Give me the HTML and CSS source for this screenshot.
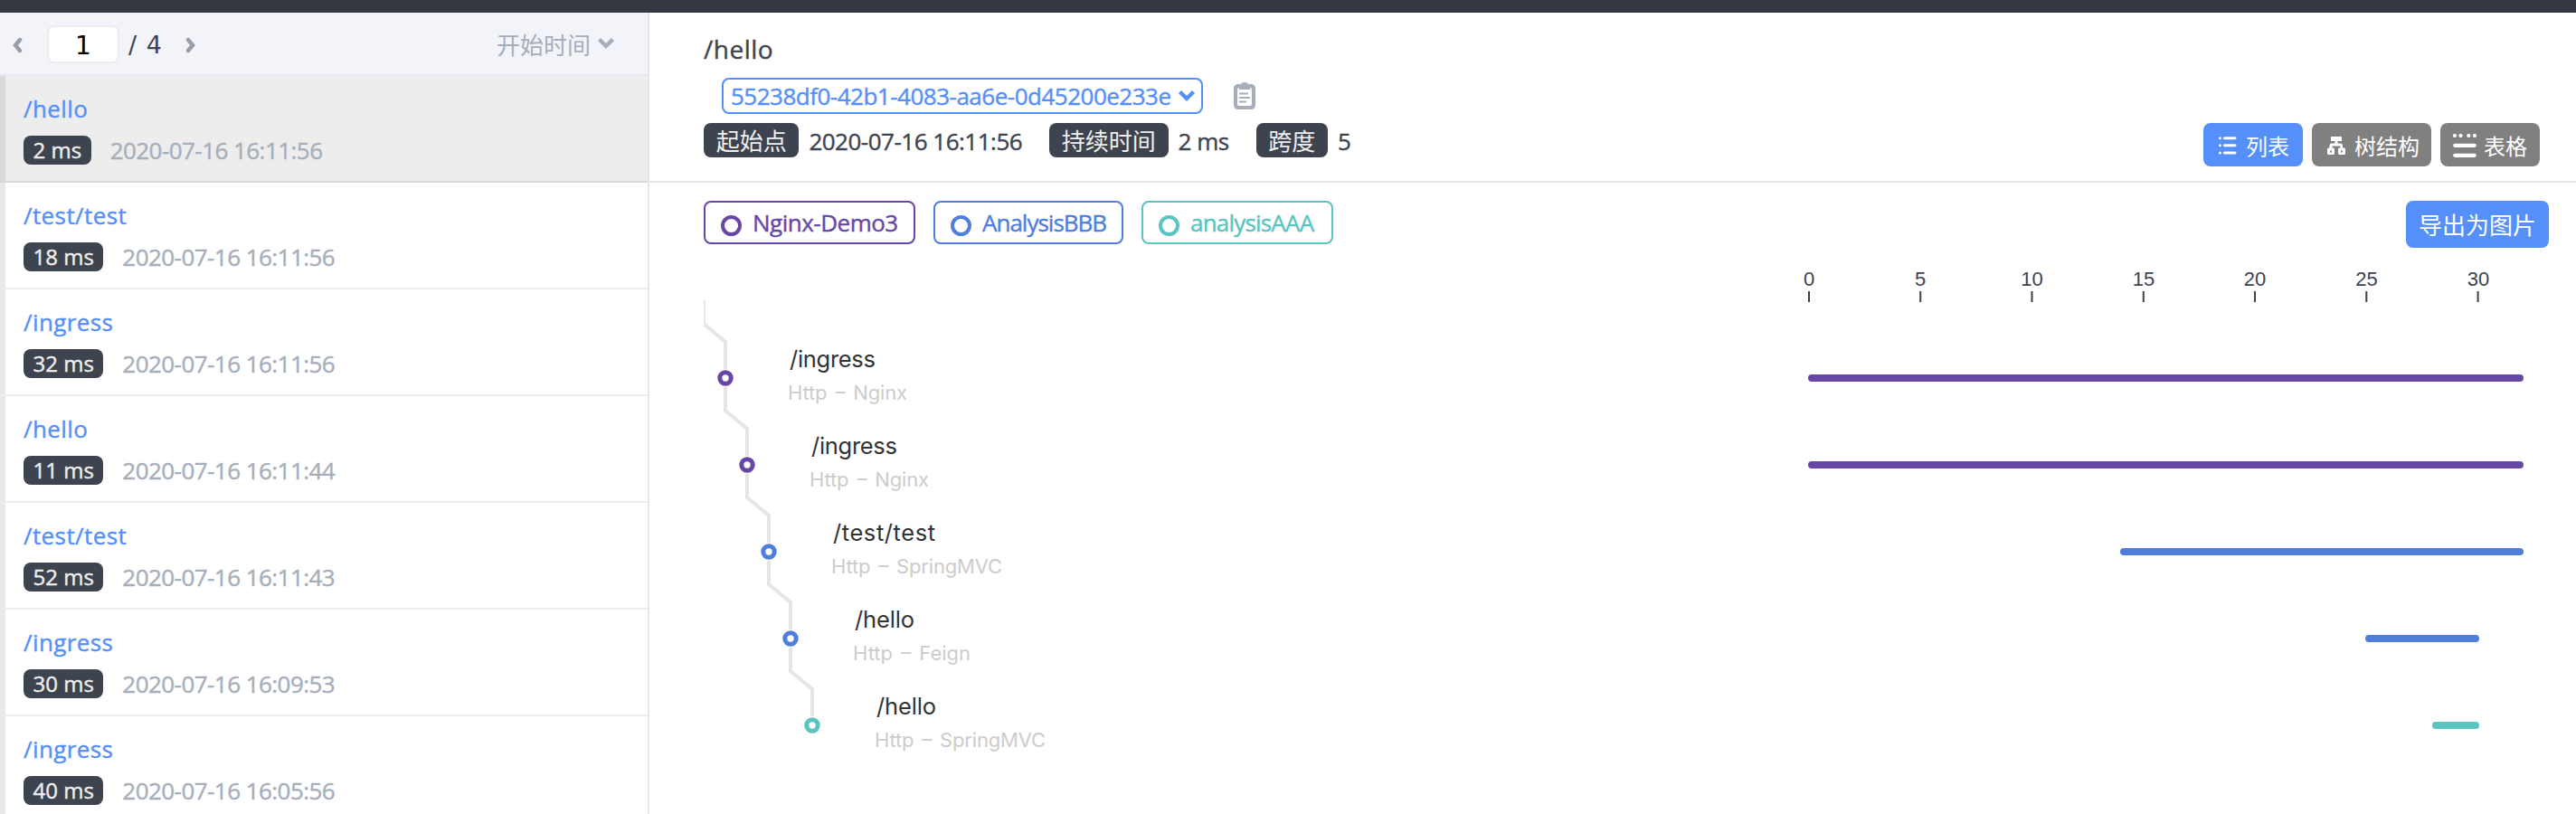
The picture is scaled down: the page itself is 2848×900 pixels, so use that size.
FILE: index.html
```html
<!DOCTYPE html>
<html lang="zh-CN">
<head>
<meta charset="utf-8">
<title>Trace</title>
<link rel="stylesheet" href="styles.css">
</head>
<body>
<div class="topbar"></div>
<div class="page">
  <aside class="sidebar">
    <div class="pager">
      <svg class="arrow" width="12" height="20" viewBox="0 0 12 20"><path d="M9 4L4 10L9 16"/></svg>
      <span class="page-input">1</span>
      <span class="page-total">/ 4</span>
      <svg class="arrow" width="12" height="20" viewBox="0 0 12 20"><path d="M3 4L8 10L3 16"/></svg>
      <div class="sort"><span>开始时间</span><svg width="20" height="14" viewBox="0 0 20 14"><path d="M2.500 2.500L10 10L17.500 2.500"/></svg></div>
    </div>
    <ul class="traces">
      <li class="trace active"><div class="name">/hello</div><div class="meta"><span class="tag">2 ms</span><time>2020-07-16 16:11:56</time></div></li>
      <li class="trace"><div class="name">/test/test</div><div class="meta"><span class="tag">18 ms</span><time>2020-07-16 16:11:56</time></div></li>
      <li class="trace"><div class="name">/ingress</div><div class="meta"><span class="tag">32 ms</span><time>2020-07-16 16:11:56</time></div></li>
      <li class="trace"><div class="name">/hello</div><div class="meta"><span class="tag">11 ms</span><time>2020-07-16 16:11:44</time></div></li>
      <li class="trace"><div class="name">/test/test</div><div class="meta"><span class="tag">52 ms</span><time>2020-07-16 16:11:43</time></div></li>
      <li class="trace"><div class="name">/ingress</div><div class="meta"><span class="tag">30 ms</span><time>2020-07-16 16:09:53</time></div></li>
      <li class="trace"><div class="name">/ingress</div><div class="meta"><span class="tag">40 ms</span><time>2020-07-16 16:05:56</time></div></li>
    </ul>
  </aside>
  <main class="detail">
    <header class="head">
      <h1>/hello</h1>
      <div class="id-row">
        <div class="trace-id"><span>55238df0-42b1-4083-aa6e-0d45200e233e</span><svg width="20" height="14" viewBox="0 0 20 14"><path d="M2.500 2.500L10 10L17.500 2.500"/></svg></div>
        <svg class="clip" width="24" height="30" viewBox="0 0 24 30"><path fill="#a7aebb" fill-rule="evenodd" d="M4.500 2H8Q8.500 0 12 0Q15.500 0 16 2H19.500Q24 2.500 24 7V25Q24 30 19 30H5Q0 30 0 25V7Q0 2.500 4.500 2ZM4 7V24Q4 26 6 26H18Q20 26 20 24V7L18 6V8H6V6Z"/><path stroke="#a7aebb" stroke-width="2" d="M6 12.500H16M6 17H18M6 21.500H14"/></svg>
      </div>
      <div class="info-row">
        <div class="info"><span class="label">起始点</span><span class="value">2020-07-16 16:11:56</span></div>
        <div class="info"><span class="label">持续时间</span><span class="value">2 ms</span></div>
        <div class="info"><span class="label">跨度</span><span class="value">5</span></div>
        <div class="views">
          <button class="view list on"><svg width="20" height="20" viewBox="0 0 20 20"><path d="M6.500 1.700H18M6.500 9.800H18M6.500 18H18"/><path d="M1.500 1.700h.01M1.500 9.800h.01M1.500 18h.01"/></svg>列表</button>
          <button class="view tree"><svg width="20" height="20" viewBox="0 0 20 20"><path class="solid" fill-rule="evenodd" d="M4 0H15.500Q16 0 16 .5V5H11.500V7.500H14.500Q17 7.500 17 10V12.500H18.500Q20 12.500 20 14V18.500Q20 20 18.500 20H13.500Q12 20 12 18.500V14Q12 12.500 13.500 12.500H14.500V10.500H5.500V12.500H6.500Q8 12.500 8 14V18.500Q8 20 6.500 20H1.500Q0 20 0 18.500V14Q0 12.500 1.500 12.500H2.500V10Q2.500 7.500 5 7.500H8.500V5H4ZM3 15.500V17.500H5V15.500ZM15 15.500V17.500H17V15.500Z"/></svg>树结构</button>
          <button class="view table"><svg width="26" height="26" viewBox="0 0 26 26"><path d="M2.200 12.800H23.800M2.200 23.800H23.800"/><path d="M2 2h.01M8.500 2h.01M17.300 2h.01M24 2h.01"/></svg>表格</button>
        </div>
      </div>
    </header>
    <div class="legend">
      <span class="chip purple"><i></i>Nginx-Demo3</span>
      <span class="chip blue"><i></i>AnalysisBBB</span>
      <span class="chip teal"><i></i>analysisAAA</span>
      <button class="export">导出为图片</button>
    </div>
    <svg class="chart" width="2130" height="626" viewBox="718 274 2130 626">
      <g class="axis">
        <text x="2000" y="316">0</text><text x="2123" y="316">5</text><text x="2246.500" y="316">10</text><text x="2370" y="316">15</text><text x="2493" y="316">20</text><text x="2616.500" y="316">25</text><text x="2740" y="316">30</text>
        <path d="M2000 322v12M2123.200 322v12M2246.500 322v12M2369.800 322v12M2493 322v12M2616.300 322v12M2739.600 322v12"/>
      </g>
      <path class="link thin" d="M779 332V359"/>
      <path class="link" d="M779 359L802 378V408M802 428V454L826 474V504M826 524V550L850 570V600M850 620V646L874 666V696M874 716V742L898 762V792"/>
      <g class="node purple"><circle cx="802" cy="418" r="6.200"/><circle cx="826" cy="514" r="6.200"/></g>
      <g class="node blue"><circle cx="850" cy="610" r="6.200"/><circle cx="874" cy="706" r="6.200"/></g>
      <g class="node teal"><circle cx="898" cy="802" r="6.200"/></g>
      <g class="op">
        <text x="873" y="406" textLength="95">/ingress</text><text x="897" y="502" textLength="95">/ingress</text><text x="921" y="598" textLength="113">/test/test</text><text x="945" y="694" textLength="66">/hello</text><text x="969" y="790" textLength="66">/hello</text>
      </g>
      <g class="layer">
        <text x="871" y="442" textLength="132">Http – Nginx</text><text x="895" y="538" textLength="132">Http – Nginx</text><text x="919" y="634" textLength="189">Http – SpringMVC</text><text x="943" y="730" textLength="130">Http – Feign</text><text x="967" y="826" textLength="189">Http – SpringMVC</text>
      </g>
      <g class="purple"><rect x="1999" y="414" width="791" height="8" rx="4"/><rect x="1999" y="510" width="791" height="8" rx="4"/></g>
      <g class="blue"><rect x="2344" y="606" width="446" height="8" rx="4"/><rect x="2615" y="702" width="126" height="8" rx="4"/></g>
      <g class="teal"><rect x="2689" y="798" width="52" height="8" rx="4"/></g>
    </svg>
  </main>
</div>
</body>
</html>
```
FILE: styles.css
```css
* { box-sizing: border-box; }
body {
  margin: 0;
  height: 900px;
  overflow: hidden;
  font: 26px/36px "Open Sans", "Noto Sans CJK SC", sans-serif;
  color: #3d444f;
  background: #fff;
}
.topbar { height: 14px; background: #333840; }
.page { display: flex; height: 886px; }
.sidebar { width: 718px; border-right: 2px solid #e5e5e8; overflow: hidden; }
.pager {
  display: flex;
  align-items: center;
  height: 70px;
  padding: 2px 36px 0 13px;
  background: #f3f4f9;
  border-bottom: 2px solid #e6e8ed;
}
.arrow, .sort svg, .trace-id svg { fill: none; stroke: #9a9da5; stroke-width: 4.4; }
.arrow { stroke-linecap: round; margin-top: 2px; }
.page-input {
  width: 80px;
  height: 42px;
  margin: 0 10px 0 27px;
  font: 28px/42px "DejaVu Sans", sans-serif;
  text-align: center;
  color: #000;
  background: #fff;
  border: 2px solid #ececec;
  border-radius: 8px;
}
.page-total { width: 63px; padding-top: 2px; font: 27px/40px "DejaVu Sans", sans-serif; letter-spacing: 1px; }
.sort { display: flex; align-items: center; gap: 7px; margin-left: auto; padding-top: 2px; color: #a7aebb; }
.sort svg { stroke: #a7aebb; margin-bottom: 5px; }
.traces { margin: 0; padding: 0; list-style: none; }
.trace {
  height: 118px;
  padding: 18px 20px 0;
  border-left: 6px solid #e9e9e9;
  border-bottom: 2px solid #ececec;
}
.trace.active { background: #ededed; border-color: #d9d9d9; }
.name, .tag, time, h1, .trace-id span, .value, .chip { -webkit-text-stroke: 0.4px currentColor; }
.name { color: #558ff9; letter-spacing: 0.4px; }
.meta { display: flex; align-items: center; gap: 21px; margin-top: 10px; }
.tag {
  height: 32px;
  padding: 0 10.500px;
  line-height: 32px;
  font-size: 24px;
  color: #efefef;
  background: #3d444f;
  border-radius: 8px;
}
time { color: #a7aebb; letter-spacing: -0.55px; }
.detail { width: 2130px; }
.head { height: 188px; padding: 22px 40px 0 60px; border-bottom: 2px solid #e4e4e4; }
h1 { margin: 0; font-size: 28px; line-height: 36px; font-weight: 400; letter-spacing: 0.5px; }
.id-row { display: flex; align-items: center; height: 40px; margin: 14px 0 10px 20px; }
.trace-id {
  display: flex;
  align-items: center;
  justify-content: space-between;
  width: 532px;
  height: 40px;
  padding: 0 6px 0 8px;
  color: #558ff9;
  border: 2px solid #558ff9;
  border-radius: 8px;
}
.trace-id span { letter-spacing: -0.5px; }
.trace-id svg { stroke: #558ff9; }
.clip { margin-left: 34px; }
.info-row { display: flex; height: 48px; }
.info { display: flex; align-items: center; height: 38px; gap: 11px; margin-right: 30px; }
.label {
  height: 38px;
  padding: 0 13.700px;
  line-height: 40px;
  color: #efefef;
  background: #3d444f;
  border-radius: 8px;
}
.value { padding-top: 2px; letter-spacing: -0.5px; }
.views { display: flex; gap: 10px; margin-left: auto; }
.view {
  display: flex;
  align-items: center;
  gap: 10px;
  height: 48px;
  width: 110px;
  padding: 0 0 0 17px;
  font: 24px "Noto Sans CJK SC", sans-serif;
  white-space: nowrap;
  color: #fff;
  background: #808080;
  border: 0;
  border-radius: 8px;
}
.view.on { background: #558ff9; }
.view.tree { width: 132px; }
.view.table { gap: 8px; padding-left: 14px; }
.view svg { flex: none; margin-top: 2px; fill: none; stroke: #fff; stroke-width: 3; stroke-linecap: round; }
.view.table svg { stroke-width: 4.2; }
.view .solid { fill: #fff; stroke: none; }
.legend { display: flex; gap: 20.500px; padding: 20px 30px 0 60px; height: 72px; }
.chip {
  display: flex;
  align-items: center;
  gap: 12px;
  width: 233.500px;
  height: 48px;
  padding: 0 0 0 17px;
  border: 2px solid;
  border-radius: 8px;
  letter-spacing: -0.5px;
}
.chip i { flex: none; width: 23px; height: 23px; margin-top: 6px; border: 4px solid; border-radius: 50%; }
.chip.purple { color: #6746a6; }
.chip.blue { width: 209.500px; color: #4f7edc; letter-spacing: -1px; }
.chip.teal { width: 212px; color: #5ac4c0; letter-spacing: -0.8px; }
.export {
  width: 158px;
  height: 52px;
  margin-left: auto;
  padding: 0 0 1px;
  font: 26px "Noto Sans CJK SC", sans-serif;
  color: #fff;
  background: #558ff9;
  border: 0;
  border-radius: 8px;
}
.chart { display: block; }
.axis text { font: 22px "Liberation Sans", sans-serif; text-anchor: middle; fill: #3d444f; }
.axis path { stroke: #3d444f; stroke-width: 2; }
.link { fill: none; stroke: #e5e5e5; stroke-width: 4; }
.link.thin { stroke-width: 2; }
.node circle { fill: #fff; stroke-width: 5; }
.node.purple { stroke: #6746a6; }
.node.blue { stroke: #4f7edc; }
.node.teal { stroke: #5ac4c0; }
.chart .purple { fill: #6746a6; }
.chart .blue { fill: #4f7edc; }
.chart .teal { fill: #5ac4c0; }
.op { font: 25.500px Inter, sans-serif; fill: #333; }
.layer { font: 22px Inter, sans-serif; word-spacing: 3px; fill: #ccc; }
```
